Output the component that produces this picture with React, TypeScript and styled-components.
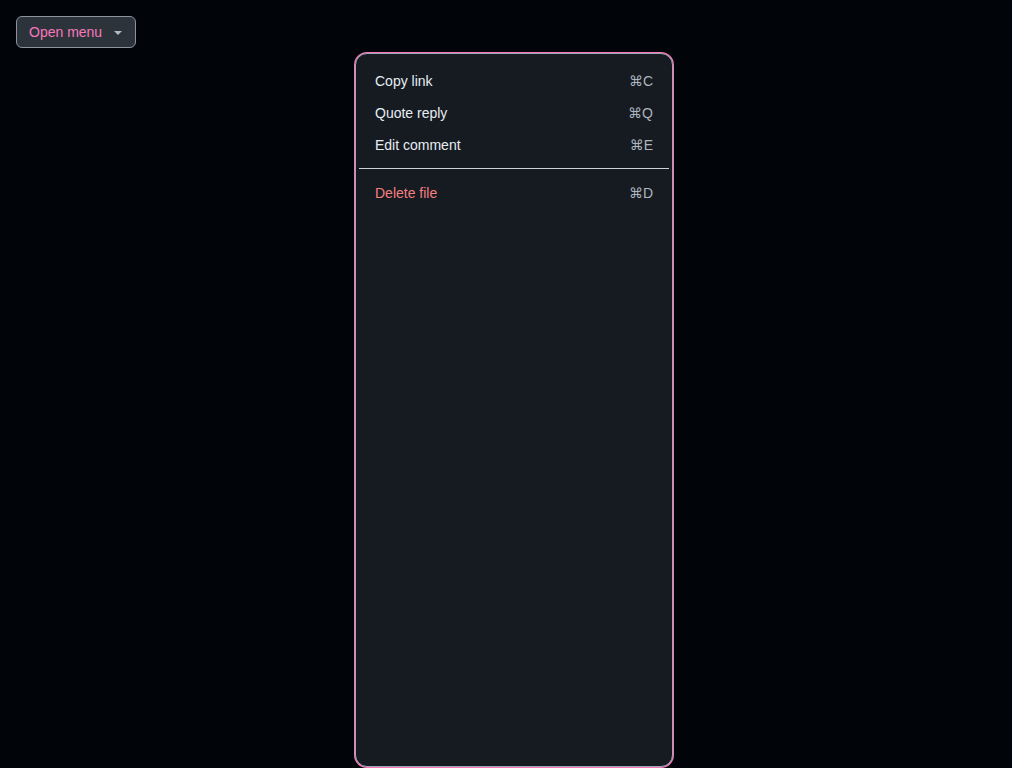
import React from "react";
import styled, { createGlobalStyle } from "styled-components";

const Global = createGlobalStyle`
  html, body { margin: 0; padding: 0; background: #010409; }
  body { font-family: "Liberation Sans", Arial, sans-serif; height: 768px; overflow: hidden; }
`;

const Page = styled.div`
  position: relative;
  width: 1012px;
  height: 768px;
  padding: 16px;
  box-sizing: border-box;
`;

const Trigger = styled.button`
  display: inline-flex;
  align-items: center;
  gap: 12px;
  height: 32px;
  padding: 0 13px 0 12px;
  box-sizing: border-box;
  background: #2d333b;
  border: 1px solid #8b949e;
  border-radius: 6px;
  color: #f778ba;
  font-family: "Liberation Sans", Arial, sans-serif;
  font-size: 14px;
  cursor: pointer;
`;

const Caret = styled.span`
  width: 0;
  height: 0;
  border-left: 4px solid transparent;
  border-right: 4px solid transparent;
  border-top: 4px solid #adbac7;
  margin-top: 1px;
`;

const Menu = styled.div`
  position: absolute;
  left: 355px;
  top: 53px;
  width: 318px;
  height: 714px;
  box-sizing: border-box;
  background: #161b22;
  border: 1px solid #9ea7b3;
  border-radius: 12px;
  box-shadow: 0 0 0 1px #f778ba;
  padding: 11px 3px;
`;

const Item = styled.div<{ $danger?: boolean }>`
  display: flex;
  align-items: center;
  justify-content: space-between;
  height: 32px;
  padding: 0 16px;
  font-size: 14px;
  color: ${(p) => (p.$danger ? "#f47f7f" : "#e6edf3")};
`;

const Shortcut = styled.span`
  color: #adb5bf;
  font-size: 14px;
  font-family: "Liberation Sans", "DejaVu Sans", sans-serif;
`;

const Separator = styled.div`
  height: 1px;
  background: #c9d1d9;
  margin: 7px 0 8px;
`;

export default function App() {
  return (
    <Page>
      <Global />
      <Trigger>
        Open menu
        <Caret />
      </Trigger>
      <Menu>
        <Item>
          Copy link<Shortcut>⌘C</Shortcut>
        </Item>
        <Item>
          Quote reply<Shortcut>⌘Q</Shortcut>
        </Item>
        <Item>
          Edit comment<Shortcut>⌘E</Shortcut>
        </Item>
        <Separator />
        <Item $danger>
          Delete file<Shortcut>⌘D</Shortcut>
        </Item>
      </Menu>
    </Page>
  );
}
